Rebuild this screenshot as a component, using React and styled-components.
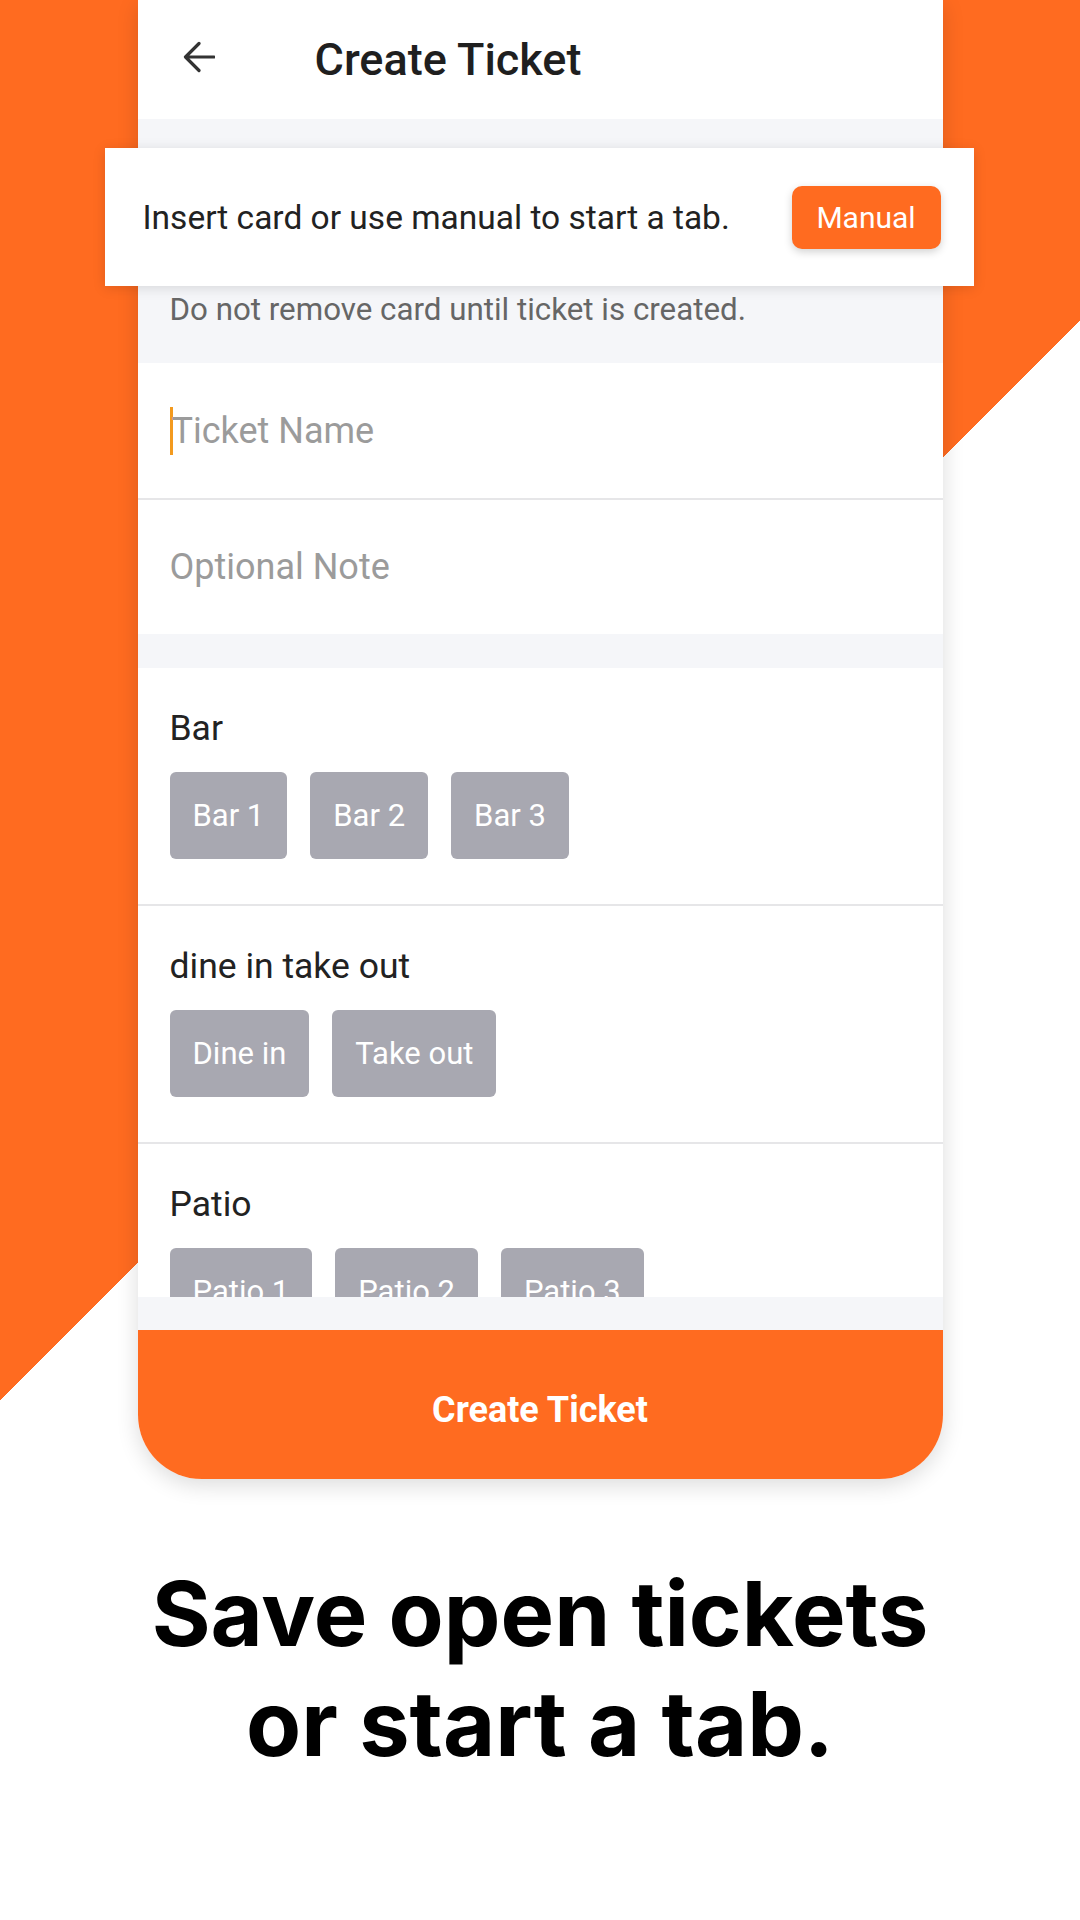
import React from "react";
import styled, { createGlobalStyle } from "styled-components";

const GlobalStyle = createGlobalStyle`
  html, body {
    margin: 0;
    padding: 0;
    background: #ffffff;
  }
  * { box-sizing: border-box; }
`;

const ORANGE = "#FF6B20";

const Page = styled.div`
  width: 1080px;
  height: 1920px;
  overflow: hidden;
  display: flex;
  flex-direction: column;
  align-items: center;
  background: linear-gradient(135deg, ${ORANGE} 46.667%, #ffffff 46.667%);
  font-family: Roboto, "Liberation Sans", sans-serif;
`;

const Card = styled.div`
  width: 805px;
  display: flex;
  flex-direction: column;
  background: #ffffff;
  border-radius: 0 0 64px 64px;
  box-shadow: 0 6px 22px rgba(0, 0, 0, 0.14);
`;

const Header = styled.header`
  height: 119px;
  display: flex;
  align-items: center;
  padding-left: 45px;
  gap: 100px;
  background: #ffffff;
`;

const BackIcon = styled.svg`
  width: 32px;
  height: 32px;
  margin-top: -5px;
  flex: none;
`;

const Title = styled.h1`
  margin: 0;
  font-size: 45px;
  font-weight: 500;
  color: #1f1f1f;
  line-height: 119px;
`;

const InfoBand = styled.section`
  background: #f5f6f9;
  padding: 29px 0 33px;
  display: flex;
  flex-direction: column;
`;

const Banner = styled.div`
  height: 138px;
  margin: 0 -31px 0 -33px;
  padding: 0 33px 0 38px;
  background: #ffffff;
  box-shadow: 0 2px 12px rgba(0, 0, 0, 0.13);
  display: flex;
  align-items: center;
  justify-content: space-between;
`;

const BannerText = styled.span`
  font-size: 33.5px;
  color: #222222;
`;

const ManualButton = styled.button`
  height: 63px;
  width: 149px;
  border: none;
  border-radius: 10px;
  background: ${ORANGE};
  color: #ffffff;
  font-family: Roboto, "Liberation Sans", sans-serif;
  font-size: 30px;
  box-shadow: 0 3px 8px rgba(0, 0, 0, 0.18);
  padding: 0;
`;

const Hint = styled.p`
  margin: 4px 0 0;
  padding-left: 32px;
  font-size: 31.3px;
  line-height: 40px;
  color: #666666;
`;

const ScrollArea = styled.div`
  height: 934px;
  overflow: hidden;
  display: flex;
  flex-direction: column;
`;

const Field = styled.div`
  flex: none;
  height: ${(p) => p.$h}px;
  display: flex;
  align-items: center;
  padding-left: 32px;
  font-size: 36px;
  color: #9b9b9b;
  border-bottom: ${(p) => (p.$divider ? "2px solid #e6e6e8" : "none")};
`;

const Caret = styled.span`
  width: 3px;
  height: 48px;
  background: #f39a1e;
  margin-right: -1px;
  flex: none;
`;

const Gap = styled.div`
  flex: none;
  height: ${(p) => p.$h}px;
  background: #f5f6f9;
`;

const Section = styled.div`
  flex: none;
  padding: 40px 32px 45px;
  border-bottom: 2px solid #e6e6e8;
`;

const SectionLabel = styled.div`
  font-size: 35.5px;
  line-height: 40px;
  color: #222222;
`;

const Chips = styled.div`
  display: flex;
  gap: 23px;
  margin-top: 24px;
`;

const Chip = styled.button`
  height: 87px;
  padding: 0 23px;
  border: none;
  border-radius: 6px;
  background: #a8a8b1;
  color: #ffffff;
  font-family: Roboto, "Liberation Sans", sans-serif;
  font-size: 31px;
`;

const CreateButton = styled.button`
  height: 149px;
  border: none;
  padding: 11px 0 0;
  border-radius: 0 0 64px 64px;
  background: ${ORANGE};
  color: #ffffff;
  font-family: Roboto, "Liberation Sans", sans-serif;
  font-size: 36px;
  font-weight: 700;
`;

const Headline = styled.h2`
  margin: 80px 0 0;
  font-family: Inter, "Liberation Sans", sans-serif;
  font-weight: 700;
  font-size: 90px;
  line-height: 110px;
  text-align: center;
  color: #000000;
`;

const sections = [
  { label: "Bar", items: ["Bar 1", "Bar 2", "Bar 3"] },
  { label: "dine in take out", items: ["Dine in", "Take out"] },
  { label: "Patio", items: ["Patio 1", "Patio 2", "Patio 3"] },
];

export default function App() {
  return (
    <>
      <GlobalStyle />
      <Page>
        <Card>
          <Header>
            <BackIcon viewBox="0 0 32 32" fill="none">
              <path
                d="M31 16H3M16 2.5L2.5 16L16 29.5"
                stroke="#333333"
                strokeWidth="3.2"
                strokeLinecap="round"
                strokeLinejoin="round"
              />
            </BackIcon>
            <Title>Create Ticket</Title>
          </Header>
          <InfoBand>
            <Banner>
              <BannerText>Insert card or use manual to start a tab.</BannerText>
              <ManualButton>Manual</ManualButton>
            </Banner>
            <Hint>Do not remove card until ticket is created.</Hint>
          </InfoBand>
          <ScrollArea>
            <Field $h={137} $divider>
              <Caret />
              <span>Ticket Name</span>
            </Field>
            <Field $h={134}>Optional Note</Field>
            <Gap $h={34} />
            {sections.map((s) => (
              <Section key={s.label}>
                <SectionLabel>{s.label}</SectionLabel>
                <Chips>
                  {s.items.map((it) => (
                    <Chip key={it}>{it}</Chip>
                  ))}
                </Chips>
              </Section>
            ))}
          </ScrollArea>
          <Gap $h={33} />
          <CreateButton>Create Ticket</CreateButton>
        </Card>
        <Headline>
          Save open tickets
          <br />
          or start a tab.
        </Headline>
      </Page>
    </>
  );
}
